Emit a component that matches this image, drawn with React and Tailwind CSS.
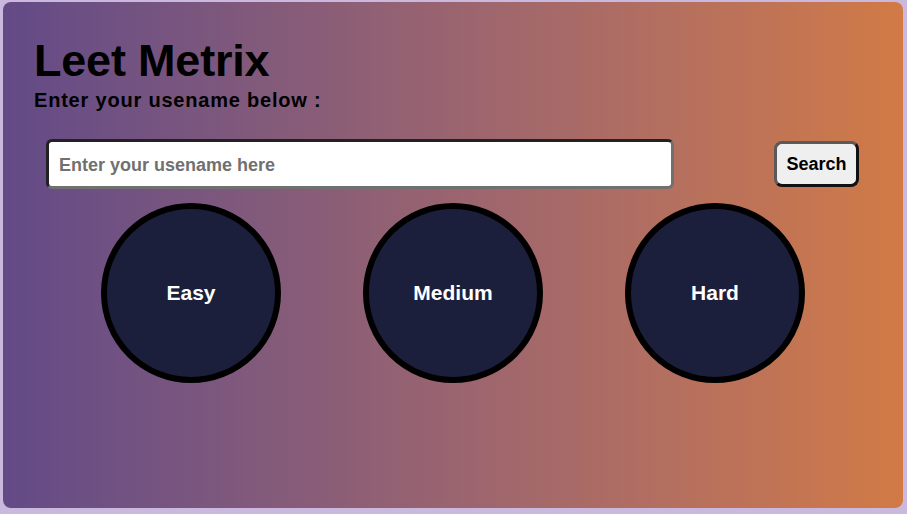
import React from 'react';

const LEVELS = ['Easy', 'Medium', 'Hard'];

export default function App() {
  return (
    <div className="w-[907px] h-[514px] bg-[#cbb8de] pt-[2px] pl-[3px] font-['Liberation_Sans',Arial,sans-serif]">
      <div className="w-[900px] h-[506px] rounded-[8px] bg-gradient-to-r from-[#634a87] via-[#9a646f] to-[#d17a45] px-[16px] pt-[36px]">

        {/* Heading */}
        <div className="pl-[15px]">
          <h1 className="text-[45px] leading-[46px] font-bold text-black tracking-[-0.2px]">Leet Metrix</h1>
          <p className="text-[20px] leading-[22px] font-bold text-black mt-[5px] tracking-[0.8px]">Enter your usename below :</p>
        </div>

        {/* Search row */}
        <div className="flex items-center mt-[28px] pl-[27px] pr-[28px]">
          <input
            type="text"
            placeholder="Enter your usename here"
            className="w-[628px] h-[50px] bg-white rounded-[6px] border-[3px] border-t-[#222] border-l-[#222] border-b-[#707070] border-r-[#707070] px-[10px] pt-[2px] text-[18px] font-bold placeholder:text-[#707070] outline-none"
          />
          <button className="ml-auto w-[85px] h-[46px] bg-[#efefef] rounded-[8px] border-[3px] border-t-[#5a5a5a] border-l-[#5a5a5a] border-b-[#111] border-r-[#111] text-[18px] font-bold text-black">
            Search
          </button>
        </div>

        {/* Difficulty circles */}
        <div className="flex justify-evenly mt-[14px]">
          {LEVELS.map((lvl) => (
            <div key={lvl} className="w-[180px] h-[180px] rounded-full bg-[#1c1f3b] border-[6px] border-black flex items-center justify-center">
              <span className="text-white text-[21px] font-bold">{lvl}</span>
            </div>
          ))}
        </div>
      </div>
    </div>
  );
}
